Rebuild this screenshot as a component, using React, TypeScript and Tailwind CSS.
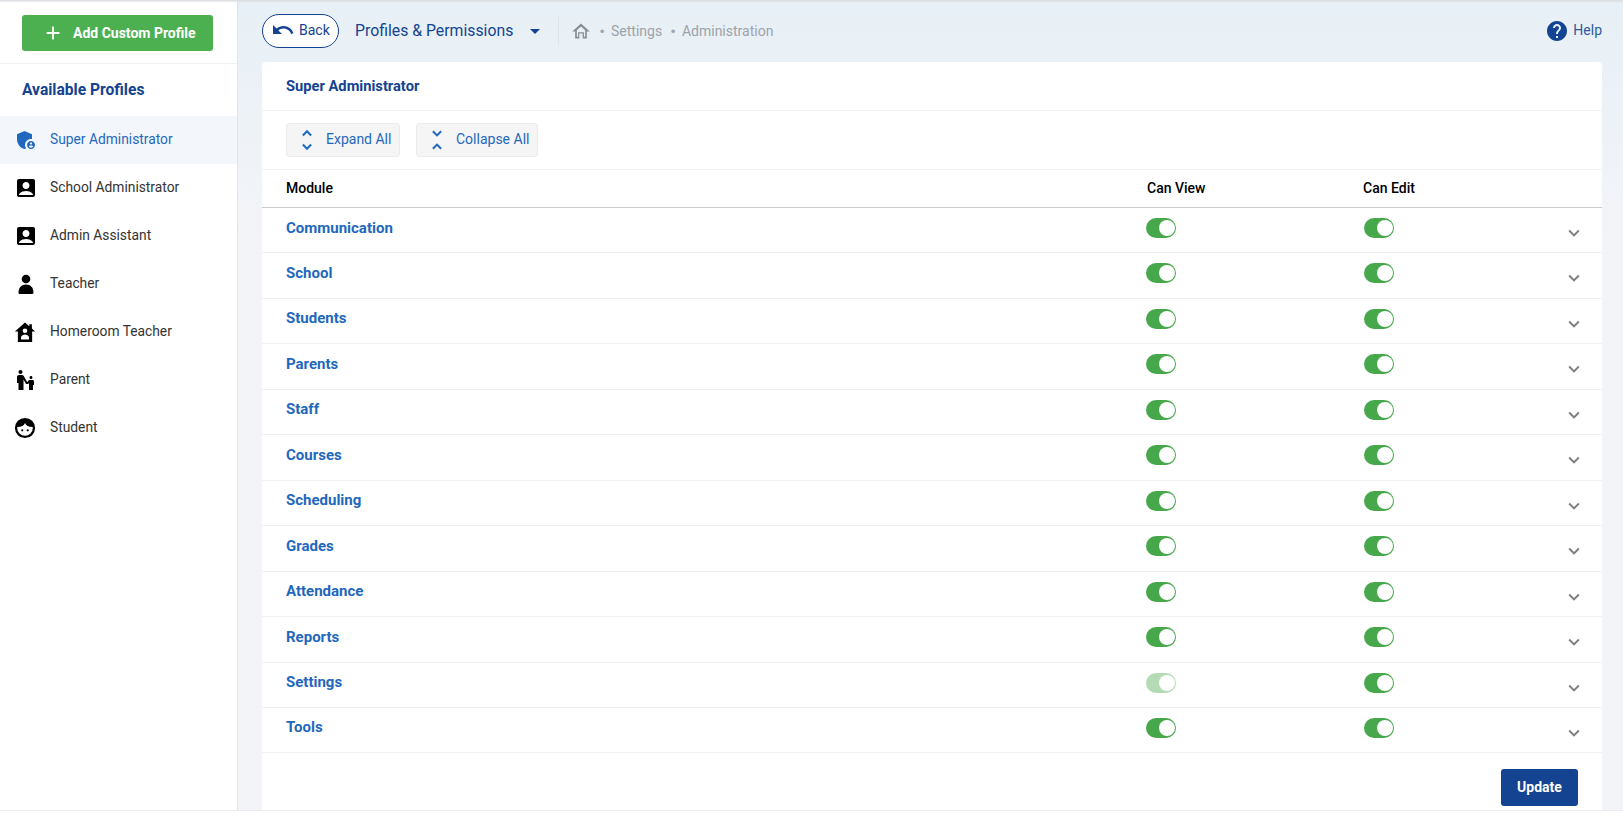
import React from 'react';
import {
  MdAccountBox,
  MdAdd,
  MdAdminPanelSettings,
  MdArrowDropDown,
  MdEscalatorWarning,
  MdExpandMore,
  MdHelp,
  MdUndo,
} from 'react-icons/md';

const TeacherIcon = () => (
  <svg viewBox="0 0 24 24" className="w-[24px] h-[24px] fill-black">
    <circle cx="12" cy="7" r="4.300" />
    <path d="M4.500 20.500c0-5 3-8 7.500-8s7.500 3 7.500 8c0 1.200-.8 1.500-1.800 1.500H6.300c-1 0-1.800-.3-1.800-1.500Z" />
  </svg>
);

const HouseIcon = () => (
  <svg viewBox="0 0 24 24" className="w-[22px] h-[22px] fill-black">
    <path
      fillRule="evenodd"
      d="M12 1.500 1 11.500h3.200V23h15.600V11.500H23l-3.500-3.200V3.500h-2.800v2.300L12 1.500Zm0 6.700a2.500 2.500 0 1 1 0 5 2.500 2.500 0 0 1 0-5Zm-4.300 12v-2.400c0-2 2.900-3 4.300-3s4.300 1 4.300 3v2.400H7.700Z"
    />
  </svg>
);

const FaceIcon = () => (
  <svg viewBox="0 0 24 24" className="w-[22px] h-[22px] fill-black">
    <path
      fillRule="evenodd"
      d="M12 1a11 11 0 1 0 0 22 11 11 0 0 0 0-22ZM3.600 11C8 11 11 9.500 12 6.500 13 9.500 16 11 20.400 11c.1.300.1.700.1 1a8.500 8.500 0 0 1-17 0c0-.3 0-.7.1-1Z"
    />
    <circle cx="9" cy="14.500" r="1.200" />
    <circle cx="15" cy="14.500" r="1.200" />
  </svg>
);

const HomeIcon = () => (
  <svg viewBox="0 0 24 24" className="w-[20px] h-[20px] ml-[12px] fill-[#868d94]">
    <path
      fillRule="evenodd"
      d="M12 3 1.500 12.500H5V21h5v-6h4v6h5v-8.500h3.500L12 3Zm0 3.500 5 4.500v8h-1.500v-5.500h-7V19H7v-8l5-4.500Z"
    />
  </svg>
);

const ExpandIcon = () => (
  <svg viewBox="0 0 12 24" className="w-[12px] h-[22px] fill-none stroke-[#1f68bd] stroke-[2.2]">
    <path d="M1.500 7 6 2.500 10.500 7" />
    <path d="M1.500 17 6 21.500 10.500 17" />
  </svg>
);

const CollapseIcon = () => (
  <svg viewBox="0 0 12 24" className="w-[12px] h-[22px] fill-none stroke-[#1f68bd] stroke-[2.2]">
    <path d="M1.500 2.500 6 7 10.500 2.500" />
    <path d="M1.500 21.500 6 17 10.500 21.500" />
  </svg>
);

const profiles = [
  { name: 'Super Administrator', icon: <MdAdminPanelSettings size={24} />, active: true },
  { name: 'School Administrator', icon: <MdAccountBox size={24} /> },
  { name: 'Admin Assistant', icon: <MdAccountBox size={24} /> },
  { name: 'Teacher', icon: <TeacherIcon /> },
  { name: 'Homeroom Teacher', icon: <HouseIcon /> },
  { name: 'Parent', icon: <MdEscalatorWarning size={24} /> },
  { name: 'Student', icon: <FaceIcon /> },
];

const modules = [
  'Communication',
  'School',
  'Students',
  'Parents',
  'Staff',
  'Courses',
  'Scheduling',
  'Grades',
  'Attendance',
  'Reports',
  'Settings',
  'Tools',
];

const Toggle = ({ faded }: { faded?: boolean }) => (
  <div className={`w-[30px] h-[20px] rounded-full bg-[#46a84b] flex items-center justify-end pr-[1.5px] ${faded ? 'opacity-40' : ''}`}>
    <div className="w-[16px] h-[16px] rounded-full bg-white" />
  </div>
);

const App = () => {
  return (
    <div className="relative h-[820px] overflow-hidden bg-white text-[14px] font-['Roboto',sans-serif]">
      <div className="absolute inset-x-0 top-0 h-[3px] bg-gradient-to-b from-[#d9dcdf] to-transparent z-10" />
      <div className="flex h-[811px] border-b border-[#ececec]">
        <aside className="w-[238px] shrink-0 bg-white border-r border-[#e2e4e8]">
          <div className="h-[64px] pt-[15px] pl-[22px] border-b border-[#f1f1f1]">
            <button className="w-[191px] h-[36px] rounded-[3px] bg-[#4caf50] text-white font-bold flex items-center pl-[20px] gap-[9px]">
              <MdAdd size={22} />
              Add Custom Profile
            </button>
          </div>
          <div className="h-[52px] pl-[22px] pt-[2px] flex items-center text-[15.6px] font-bold text-[#134391]">Available Profiles</div>
          {profiles.map((profile) => (
            <div
              key={profile.name}
              className={`h-[48px] flex items-center ${profile.active ? 'bg-[#f3f7fb] text-[#1f68bd]' : 'text-[#333] [&_svg]:text-black'}`}
            >
              <div className="w-[50px] pl-[14px] flex items-center justify-start">{profile.icon}</div>
              <span className="text-[13.8px] pb-[2px]">{profile.name}</span>
            </div>
          ))}
        </aside>
        <main className="flex-1 min-w-0 pl-[24px] pr-[21px] bg-gradient-to-b from-[#e7f0f6] to-[#f3f4f8] to-30% flex flex-col">
          <header className="h-[62px] flex items-center">
            <button className="w-[77px] h-[34px] rounded-full border border-[#134391] bg-white text-[#134391] flex items-center pl-[8px] gap-[4px] pb-[2px]">
              <MdUndo size={24} />
              Back
            </button>
            <span className="ml-[16px] text-[15.8px] text-[#134391]">Profiles &amp; Permissions</span>
            <MdArrowDropDown size={24} className="ml-[10px] text-[#134391]" />
            <div className="ml-[11px] w-px h-[28px] bg-[#dde3ea]" />
            <HomeIcon />
            <span className="ml-[8px] text-[17px] leading-none text-[#9ca3a9]">•</span>
            <span className="ml-[6px] text-[#9ca3a9]">Settings</span>
            <span className="ml-[8px] text-[17px] leading-none text-[#9ca3a9]">•</span>
            <span className="ml-[6px] text-[#9ca3a9]">Administration</span>
            <div className="ml-auto flex items-center gap-[4px] text-[#2c5a9f]">
              <MdHelp size={24} className="text-[#134391]" />
              <span className="pb-[2px]">Help</span>
            </div>
          </header>
          <section className="flex-1 bg-white rounded-t-[4px]">
            <div className="h-[49px] pl-[24px] flex items-center text-[14.7px] font-bold text-[#134391] border-b border-[#f3f3f3]">Super Administrator</div>
            <div className="h-[59px] pl-[24px] flex items-center gap-[16px] border-b border-[#f3f3f3]">
              <button className="w-[114px] h-[34px] rounded-[3px] border border-[#ebebeb] bg-[#f5f5f5] text-[#1f68bd] flex items-center pl-[14px] gap-[13px]">
                <ExpandIcon />
                <span className="pb-[1px]">Expand All</span>
              </button>
              <button className="w-[122px] h-[34px] rounded-[3px] border border-[#ebebeb] bg-[#f5f5f5] text-[#1f68bd] flex items-center pl-[14px] gap-[13px]">
                <CollapseIcon />
                <span className="pb-[1px]">Collapse All</span>
              </button>
            </div>
            <div className="h-[38px] pl-[24px] flex items-center font-medium text-black border-b border-[#cccccc]">
              <span className="w-[861px]">Module</span>
              <span className="w-[216px]">Can View</span>
              <span>Can Edit</span>
            </div>
            {modules.map((name) => (
              <div key={name} className="h-[45.46px] pl-[24px] flex items-start border-b border-[#f0f0f0]">
                <span className="w-[860px] pt-[8.5px] text-[15px] font-bold text-[#1f68bd]">{name}</span>
                <div className="w-[218px] pt-[10px]">
                  <Toggle faded={name === 'Settings'} />
                </div>
                <div className="pt-[10px]">
                  <Toggle />
                </div>
                <MdExpandMore size={22} className="ml-[169px] mt-[14px] text-[#7f7f7f]" />
              </div>
            ))}
            <div className="flex justify-end pt-[16px] pr-[24px]">
              <button className="w-[77px] h-[37px] rounded-[3px] bg-[#134391] text-white font-bold">Update</button>
            </div>
          </section>
        </main>
      </div>
    </div>
  );
};

export default App;
